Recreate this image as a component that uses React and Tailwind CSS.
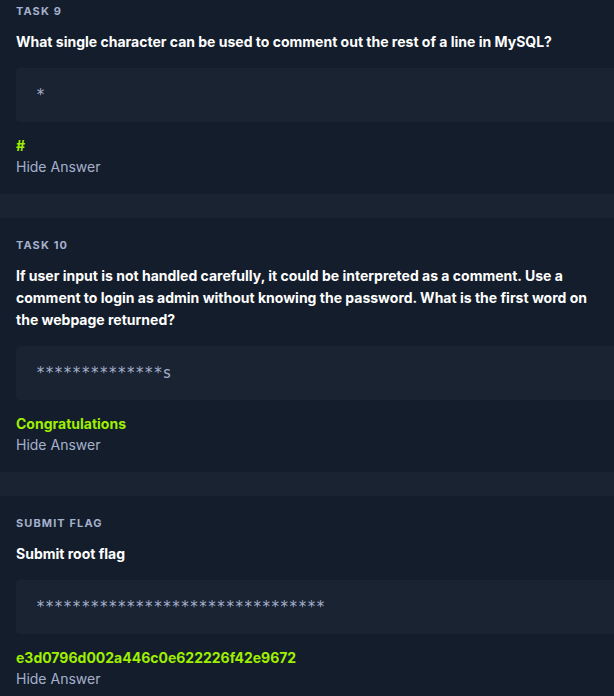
import React from 'react';

const tasks = [
  {
    label: 'Task 9',
    question: 'What single character can be used to comment out the rest of a line in MySQL?',
    masked: '*',
    answer: '#',
  },
  {
    label: 'Task 10',
    question:
      'If user input is not handled carefully, it could be interpreted as a comment. Use a comment to login as admin without knowing the password. What is the first word on the webpage returned?',
    masked: '**************s',
    answer: 'Congratulations',
  },
  {
    label: 'Submit Flag',
    question: 'Submit root flag',
    masked: '********************************',
    answer: 'e3d0796d002a446c0e622226f42e9672',
  },
];

const TaskCard = ({ label, question, masked, answer }) => {
  return (
    <section className="bg-[#141d2b] pl-4 pr-3 pt-5 pb-[17px]">
      <h3 className="text-[11px] leading-[14px] font-bold uppercase tracking-[0.1em] text-[#a4b1cd]">{label}</h3>
      <p className="mt-[13px] text-[14px] leading-[22px] font-bold text-white">{question}</p>
      <div className="mt-[15px] -mr-3 h-[54px] rounded-l bg-[#1a2332] pl-5 flex items-center">
        <span className="font-['DejaVu_Sans_Mono',monospace] text-[15px] text-[#a4b1cd]">{masked}</span>
      </div>
      <p className="mt-[13px] text-[14px] leading-[21px] font-bold text-[#9fef00]">{answer}</p>
      <button className="block text-[14px] leading-[21px] text-[#a4b1cd]">Hide Answer</button>
    </section>
  );
};

export default function App() {
  return (
    <div className="h-[696px] w-[614px] overflow-hidden bg-[#1a2332] font-['Inter',sans-serif]">
      <div className="-mt-4 flex flex-col gap-6">
        {tasks.map((t) => (
          <TaskCard key={t.label} {...t} />
        ))}
      </div>
    </div>
  );
}
